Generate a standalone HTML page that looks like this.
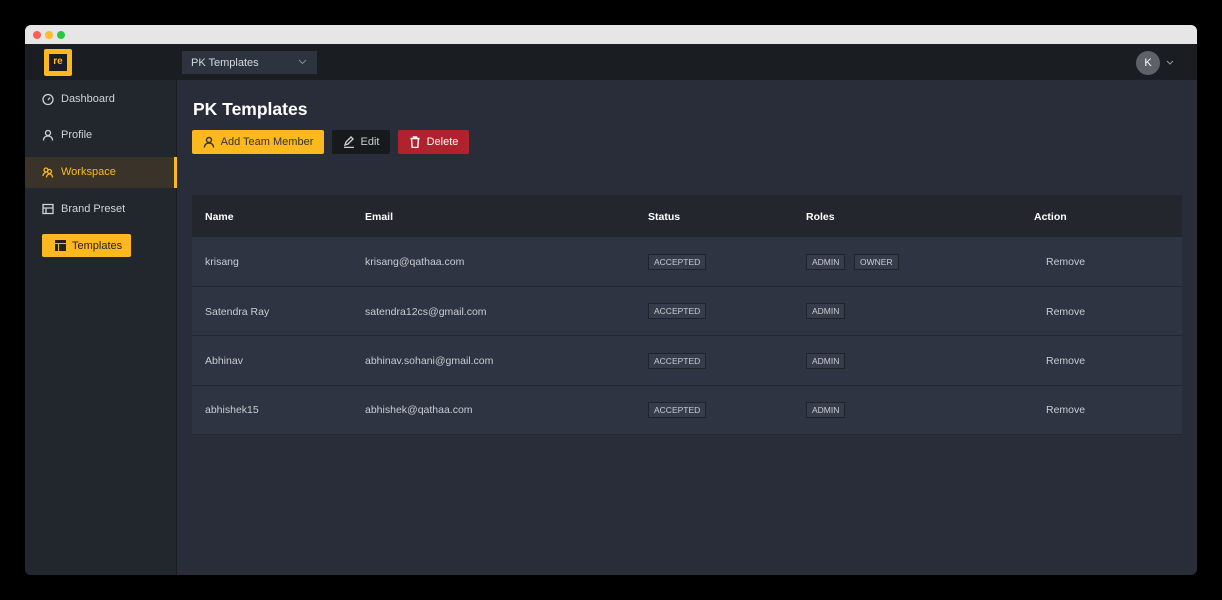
<!DOCTYPE html>
<html><head><style>
*{box-sizing:border-box;margin:0;padding:0}
body{width:1222px;height:600px;background:#000;font-family:"Liberation Sans",sans-serif;position:relative;overflow:hidden;color:#d5d8de}
.win{position:absolute;left:25px;top:25px;width:1172px;height:550px;border-radius:6px;overflow:hidden;background:#282d39}
.tb{position:absolute;left:0;top:0;width:100%;height:19px;background:#e6e6e6}
.dot{position:absolute;top:6px;width:8px;height:8px;border-radius:50%}
.hdr{position:absolute;left:0;top:19px;width:100%;height:36px;background:#1a1d22}
.side{position:absolute;left:0;top:55px;width:152px;height:495px;background:#22262d;border-right:1px solid #1a1d22}
.abs{position:absolute}
.nav{position:absolute;left:17px;font-size:11px;color:#d0d3d9;display:flex;align-items:center;gap:7px;height:14px}
.nav svg{width:12px;height:12px;fill:none;stroke:currentColor;stroke-width:1.3}
.btn{position:absolute;top:105px;height:24px;font-size:11px;display:flex;align-items:center;justify-content:center;gap:6px;border-radius:2px}
.btn svg{width:12px;height:12px;fill:none;stroke:currentColor;stroke-width:1.4}
.th{position:absolute;top:186px;font-size:10.5px;font-weight:bold;color:#fff}
.row{position:absolute;left:167px;width:990px;background:#2f3442;border-bottom:1px solid #23272e}
.c{position:absolute;font-size:10.5px;color:#c9ccd3}
.tag{position:absolute;font-size:8.5px;color:#c9ccd3;background:#373c4a;border:1px solid #1f232a;padding:2px 5px;height:16px;line-height:11px}
</style></head><body>
<div class="win">
<div class="tb"><div class="dot" style="left:8px;background:#fe5f57"></div><div class="dot" style="left:20px;background:#febc2e"></div><div class="dot" style="left:32px;background:#28c840"></div></div>
<div class="hdr">
 <div class="abs" style="left:19px;top:5px;width:28px;height:27px;background:#fbb91f;border-radius:2px"><div style="position:absolute;left:5px;top:5px;width:18px;height:17px;background:#1a1d22;color:#fbb91f;font-size:10px;font-weight:bold;text-align:center;line-height:16px">re</div></div>
 <div class="abs" style="left:157px;top:7px;width:135px;height:23px;background:#2e3340;font-size:11px;color:#d5d8de;padding:6px 9px">PK Templates<svg style="position:absolute;right:10px;top:8px" width="9" height="6" viewBox="0 0 9 6"><path d="M1 1l3.5 3.5L8 1" stroke="#888" fill="none"/></svg></div>
 <div class="abs" style="left:1111px;top:7px;width:24px;height:24px;border-radius:50%;background:#5e6168;color:#fff;font-size:11px;text-align:center;line-height:24px">K</div>
 <svg class="abs" style="left:1141px;top:16px" width="8" height="5" viewBox="0 0 8 5"><path d="M1 1l3 3 3-3" stroke="#999" fill="none"/></svg>
</div>
<div class="side">
 <div class="nav" style="top:12px"><svg viewBox="0 0 12 12"><circle cx="6" cy="6.5" r="5"/><path d="M6 7l2-2.5M3 8h0"/></svg>Dashboard</div>
 <div class="nav" style="top:48px"><svg viewBox="0 0 12 12"><circle cx="6" cy="4" r="2.5"/><path d="M1.5 11.5c0-3 2-4.5 4.5-4.5s4.5 1.5 4.5 4.5"/></svg>Profile</div>
 <div class="abs" style="left:0;top:77px;width:152px;height:31px;background:#3a3329;border-right:3px solid #fbb91f"></div>
 <div class="nav" style="top:85px;color:#fbb91f"><svg viewBox="0 0 12 12"><circle cx="4" cy="4" r="2"/><circle cx="7.5" cy="5.5" r="2"/><path d="M1 10c0-2 1.5-3.5 3-3.5M4.5 11.5c0-2 1.3-3.5 3-3.5s3 1.5 3 3.5"/></svg>Workspace</div>
 <div class="nav" style="top:122px"><svg viewBox="0 0 12 12"><rect x="1" y="1.5" width="10" height="9"/><path d="M1 5h10M4 5v5.5"/></svg>Brand Preset</div>
 <div class="abs" style="left:17px;top:154px;width:89px;height:23px;background:#fbb91f;border-radius:2px;color:#222;font-size:11px;padding:0 0 0 13px;display:flex;align-items:center;gap:6px"><svg width="11" height="11" viewBox="0 0 11 11"><path d="M0 0h11v3H0zM0 4h3v7H0zM4 4h7v7H4z" fill="#222"/></svg>Templates</div>
</div>
<div class="abs" style="left:168px;top:74px;font-size:17.5px;font-weight:bold;color:#fff">PK Templates</div>
<div class="btn" style="left:167px;width:132px;background:#fbb91f;color:#333"><svg viewBox="0 0 12 12"><circle cx="6" cy="4" r="2.5"/><path d="M1.5 11.5c0-3 2-4.5 4.5-4.5s4.5 1.5 4.5 4.5"/></svg>Add Team Member</div>
<div class="btn" style="left:307px;width:58px;background:#16191d;color:#ccc"><svg viewBox="0 0 12 12"><path d="M2 9l1-3 5-5 2 2-5 5zM1 11.5h10"/></svg>Edit</div>
<div class="btn" style="left:373px;width:71px;background:#b0232c;color:#fff"><svg viewBox="0 0 12 12"><path d="M1.5 2.5h9M4.5 2.5V1h3v1.5M2.5 2.5l.7 9h5.6l.7-9"/></svg>Delete</div>
<div class="abs" style="left:167px;top:170px;width:990px;height:42px;background:#23272d"></div>
<div class="th" style="left:180px">Name</div><div class="th" style="left:340px">Email</div><div class="th" style="left:623px">Status</div><div class="th" style="left:781px">Roles</div><div class="th" style="left:1009px">Action</div>
<div class="row" style="top:212px;height:50px"><div class="c" style="left:13px;top:19px">krisang</div><div class="c" style="left:173px;top:19px">krisang@qathaa.com</div><div class="tag" style="left:456px;top:17px">ACCEPTED</div><div class="tag" style="left:614px;top:17px">ADMIN</div><div class="tag" style="left:662px;top:17px">OWNER</div><div class="c" style="left:854px;top:19px">Remove</div></div>
<div class="row" style="top:262px;height:49px"><div class="c" style="left:13px;top:19px">Satendra Ray</div><div class="c" style="left:173px;top:19px">satendra12cs@gmail.com</div><div class="tag" style="left:456px;top:16px">ACCEPTED</div><div class="tag" style="left:614px;top:16px">ADMIN</div><div class="c" style="left:854px;top:19px">Remove</div></div>
<div class="row" style="top:311px;height:50px"><div class="c" style="left:13px;top:19px">Abhinav</div><div class="c" style="left:173px;top:19px">abhinav.sohani@gmail.com</div><div class="tag" style="left:456px;top:17px">ACCEPTED</div><div class="tag" style="left:614px;top:17px">ADMIN</div><div class="c" style="left:854px;top:19px">Remove</div></div>
<div class="row" style="top:361px;height:49px"><div class="c" style="left:13px;top:18px">abhishek15</div><div class="c" style="left:173px;top:18px">abhishek@qathaa.com</div><div class="tag" style="left:456px;top:16px">ACCEPTED</div><div class="tag" style="left:614px;top:16px">ADMIN</div><div class="c" style="left:854px;top:18px">Remove</div></div>
</div>
</body></html>
